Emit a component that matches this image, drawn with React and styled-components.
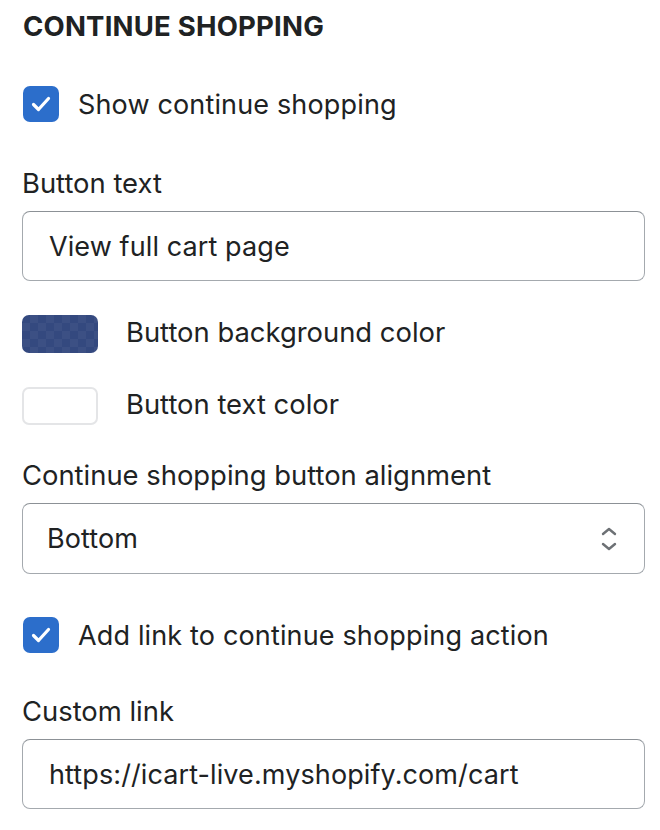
import React from 'react';
import styled, { createGlobalStyle } from 'styled-components';

const GlobalStyle = createGlobalStyle`
  body {
    margin: 0;
    background: #fff;
    color: #202223;
    font-family: Inter, 'Noto Sans', sans-serif;
  }
`;

const Panel = styled.div`
  padding: 6px 15px 20px 22px;
  display: flex;
  flex-direction: column;
`;

const Heading = styled.h2`
  margin: 0 0 38px 1px;
  font-size: 27.5px;
  line-height: 40px;
  font-weight: 700;
  letter-spacing: 0.2px;
  text-transform: uppercase;
`;

const CheckRow = styled.label`
  display: flex;
  align-items: center;
  gap: 19px;
  height: 40px;
  padding-left: 1px;
  margin-bottom: ${(p) => p.$after || 0}px;
  font-size: 27px;
  letter-spacing: 0.15px;
`;

const Box = styled.span`
  width: 36px;
  height: 36px;
  border-radius: 7px;
  background: #2c6ecb;
  display: flex;
  align-items: center;
  justify-content: center;
  flex-shrink: 0;
`;

const Label = styled.div`
  font-size: 27.4px;
  line-height: 40px;
  margin-bottom: 8px;
`;

const Field = styled.div`
  height: ${(p) => p.$h || 70}px;
  box-sizing: border-box;
  border: 1.5px solid #a4a9ae;
  border-top-color: #8c9196;
  border-radius: 8px;
  display: flex;
  align-items: center;
  justify-content: space-between;
  padding: 0 26px 0 ${(p) => p.$pad || 26}px;
  font-size: 27px;
  letter-spacing: 0.1px;
  margin-bottom: ${(p) => p.$after || 0}px;
`;

const SwatchRow = styled.div`
  display: flex;
  align-items: center;
  gap: 28px;
  height: 38px;
  margin-bottom: ${(p) => p.$after || 0}px;
  font-size: 27.4px;
  line-height: 34px;
`;

const SwatchText = styled.span`
  margin-top: -5px;
`;

const Swatch = styled.span`
  width: 76px;
  height: 38px;
  box-sizing: border-box;
  border-radius: 7px;
  flex-shrink: 0;
  background-color: ${(p) => p.$color};
  border: ${(p) => (p.$outlined ? '2px solid #e4e5e7' : 'none')};
  ${(p) =>
    p.$checker &&
    `background-image:
      linear-gradient(45deg, rgba(255,255,255,0.04) 25%, transparent 25%, transparent 75%, rgba(255,255,255,0.04) 75%),
      linear-gradient(45deg, rgba(255,255,255,0.04) 25%, transparent 25%, transparent 75%, rgba(255,255,255,0.04) 75%);
    background-size: 16px 16px;
    background-position: 0 0, 8px 8px;`}
`;

const Check = () => (
  <svg width="20" height="16" viewBox="0 0 20 16">
    <path
      d="M2.5 8.5l5 5L17.5 2.5"
      fill="none"
      stroke="#fff"
      strokeWidth="3.2"
      strokeLinecap="round"
      strokeLinejoin="round"
    />
  </svg>
);

const Chevrons = () => (
  <svg width="18" height="26" viewBox="0 0 18 26">
    <g fill="none" stroke="#6d7175" strokeWidth="2.4" strokeLinecap="round" strokeLinejoin="round">
      <path d="M3 8l6-5 6 5" />
      <path d="M3 18l6 5 6-5" />
    </g>
  </svg>
);

export default function App() {
  return (
    <>
      <GlobalStyle />
      <Panel>
        <Heading>Continue shopping</Heading>
        <CheckRow $after={39}>
          <Box><Check /></Box>
          Show continue shopping
        </CheckRow>
        <Label>Button text</Label>
        <Field $after={34}>View full cart page</Field>
        <SwatchRow $after={34}>
          <Swatch $color="#34497f" $checker />
          <SwatchText>Button background color</SwatchText>
        </SwatchRow>
        <SwatchRow $after={30}>
          <Swatch $color="#fff" $outlined />
          <SwatchText>Button text color</SwatchText>
        </SwatchRow>
        <Label>Continue shopping button alignment</Label>
        <Field $pad={24} $h={71} $after={41}>
          Bottom
          <Chevrons />
        </Field>
        <CheckRow $after={36}>
          <Box><Check /></Box>
          Add link to continue shopping action
        </CheckRow>
        <Label>Custom link</Label>
        <Field>https://icart-live.myshopify.com/cart</Field>
      </Panel>
    </>
  );
}
